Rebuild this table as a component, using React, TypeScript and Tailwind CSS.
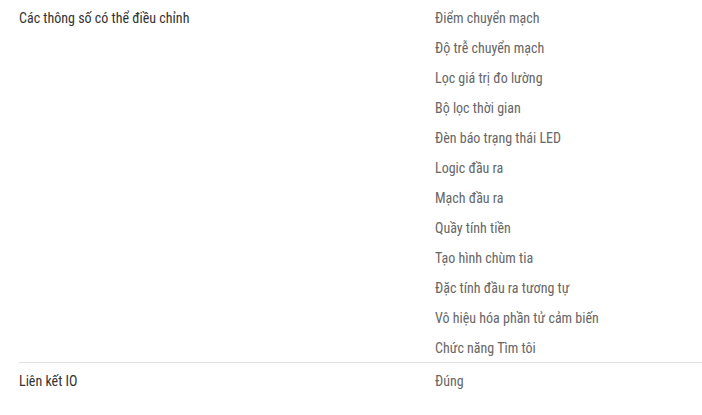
const rows: { label: string; values: string[] }[] = [
  {
    label: "Các thông số có thể điều chỉnh",
    values: [
      "Điểm chuyển mạch",
      "Độ trễ chuyển mạch",
      "Lọc giá trị đo lường",
      "Bộ lọc thời gian",
      "Đèn báo trạng thái LED",
      "Logic đầu ra",
      "Mạch đầu ra",
      "Quầy tính tiền",
      "Tạo hình chùm tia",
      "Đặc tính đầu ra tương tự",
      "Vô hiệu hóa phần tử cảm biến",
      "Chức năng Tìm tôi",
    ],
  },
  { label: "Liên kết IO", values: ["Đúng"] },
];

export default function App() {
  return (
    <div className="w-[702px] h-[415px] bg-white pl-[19px] font-['Roboto',sans-serif] font-stretch-semi-condensed text-[14px] leading-[30px]">
      {rows.map((row, i) => (
        <div
          key={row.label}
          className={i === 0 ? "flex pt-[3px] -mb-px" : "flex border-t border-[#e0e0e0] pt-[3px]"}
        >
          <div className="w-[416px] shrink-0 text-[#333333]">{row.label}</div>
          <div className="flex flex-col text-[#666666]">
            {row.values.map((v) => (
              <span key={v}>{v}</span>
            ))}
          </div>
        </div>
      ))}
    </div>
  );
}
